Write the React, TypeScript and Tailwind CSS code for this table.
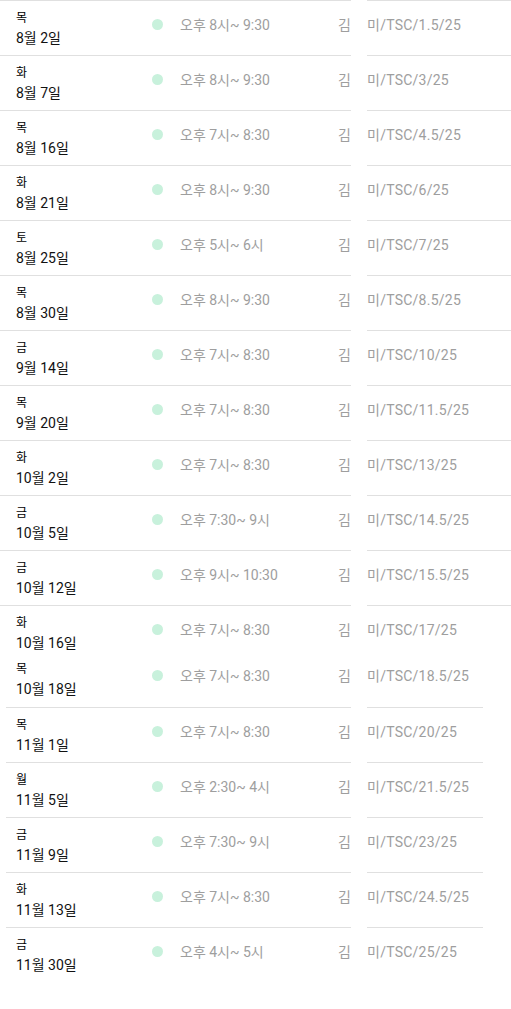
const font = { fontFamily: 'Roboto, "Noto Sans CJK KR", sans-serif' };

type Lesson = {
  day: string;
  date: string;
  time: string;
  code: string;
};

const lessons: Lesson[] = [
  { day: "목", date: "8월 2일", time: "오후 8시~ 9:30", code: "미/TSC/1.5/25" },
  { day: "화", date: "8월 7일", time: "오후 8시~ 9:30", code: "미/TSC/3/25" },
  { day: "목", date: "8월 16일", time: "오후 7시~ 8:30", code: "미/TSC/4.5/25" },
  { day: "화", date: "8월 21일", time: "오후 8시~ 9:30", code: "미/TSC/6/25" },
  { day: "토", date: "8월 25일", time: "오후 5시~ 6시", code: "미/TSC/7/25" },
  { day: "목", date: "8월 30일", time: "오후 8시~ 9:30", code: "미/TSC/8.5/25" },
  { day: "금", date: "9월 14일", time: "오후 7시~ 8:30", code: "미/TSC/10/25" },
  { day: "목", date: "9월 20일", time: "오후 7시~ 8:30", code: "미/TSC/11.5/25" },
  { day: "화", date: "10월 2일", time: "오후 7시~ 8:30", code: "미/TSC/13/25" },
  { day: "금", date: "10월 5일", time: "오후 7:30~ 9시", code: "미/TSC/14.5/25" },
  { day: "금", date: "10월 12일", time: "오후 9시~ 10:30", code: "미/TSC/15.5/25" },
  { day: "화", date: "10월 16일", time: "오후 7시~ 8:30", code: "미/TSC/17/25" },
  { day: "목", date: "10월 18일", time: "오후 7시~ 8:30", code: "미/TSC/18.5/25" },
  { day: "목", date: "11월 1일", time: "오후 7시~ 8:30", code: "미/TSC/20/25" },
  { day: "월", date: "11월 5일", time: "오후 2:30~ 4시", code: "미/TSC/21.5/25" },
  { day: "금", date: "11월 9일", time: "오후 7:30~ 9시", code: "미/TSC/23/25" },
  { day: "화", date: "11월 13일", time: "오후 7시~ 8:30", code: "미/TSC/24.5/25" },
  { day: "금", date: "11월 30일", time: "오후 4시~ 5시", code: "미/TSC/25/25" },
];

function Row({
  lesson,
  wide,
  border,
  height,
}: {
  lesson: Lesson;
  wide: boolean;
  border: boolean;
  height: string;
}) {
  const line = border ? "border-b border-[#e0e0e0]" : "";
  return (
    <div className={`flex ${height}`}>
      {/* left part: date, dot, time, teacher */}
      <div
        className={`flex ${line} ${
          wide ? "w-[351px] pl-4" : "ml-[6px] w-[345px] pl-[10px]"
        }`}
      >
        <div className="flex w-[136px] flex-col pt-[9px]">
          <span className="text-[12px] leading-[16px] text-black">{lesson.day}</span>
          <span className="mt-[2px] text-[14px] leading-[20px] text-[#111]">
            {lesson.date}
          </span>
        </div>
        <div className="mt-[18px] h-[11px] w-[11px] rounded-full bg-[#c8f1dc]" />
        <span className="ml-[17px] pt-[14px] text-[14px] leading-[20px] text-[#9e9e9e]">
          {lesson.time}
        </span>
        <span className="ml-auto pt-[14px] text-[14px] leading-[20px] text-[#9e9e9e]">
          김
        </span>
      </div>

      {/* right part: code */}
      <div
        className={`ml-4 pt-[14px] text-[14px] leading-[20px] tracking-[0.25px] text-[#9e9e9e] ${line} ${
          wide ? "w-[144px]" : "w-[116px]"
        }`}
      >
        {lesson.code}
      </div>
    </div>
  );
}

export default function App() {
  return (
    <main className="min-h-dvh w-[511px] overflow-hidden bg-white" style={font}>
      <div className="flex">
        <div className="h-px w-[351px] bg-[#e0e0e0]" />
        <div className="ml-4 h-px w-[144px] bg-[#e0e0e0]" />
      </div>
      {lessons.map((l, i) => (
        <Row
          key={i}
          lesson={l}
          wide={i < 12}
          border={i !== 11 && i !== 17}
          height={i === 11 ? "h-[46px]" : i === 12 ? "h-[56px]" : i === 17 ? "h-[54px]" : "h-[55px]"}
        />
      ))}
    </main>
  );
}
